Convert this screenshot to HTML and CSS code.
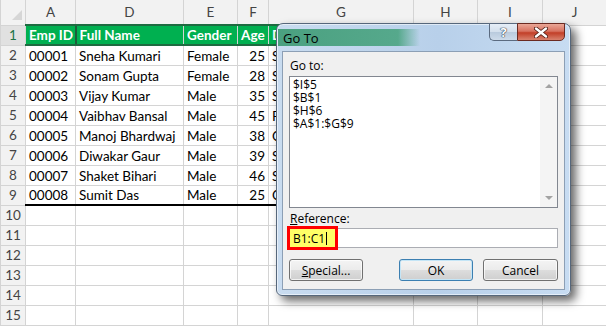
FILE: index.html
```html
<!DOCTYPE html>
<html lang="en">
<head>
    <meta charset="UTF-8">
    <meta name="viewport" content="width=device-width, initial-scale=1.0">
    <title>Go To</title>
    <link rel="stylesheet" href="styles.css">
</head>
<body>
    <div class="sheet">
        <table class="grid">
            <colgroup>
                <col class="c-rh"><col class="c-a"><col class="c-d"><col class="c-e"><col class="c-f">
                <col class="c-g"><col class="c-h"><col class="c-i"><col class="c-j">
            </colgroup>
            <thead>
                <tr>
                    <th class="corner"><span class="select-all"></span></th>
                    <th>A</th><th>D</th><th>E</th><th>F</th><th>G</th><th>H</th><th>I</th><th>J</th>
                </tr>
            </thead>
            <tbody>
                <tr class="title-row">
                    <th class="picked">1</th>
                    <td>Emp ID</td><td class="after-hidden">Full Name</td><td>Gender</td><td>Age</td><td><span class="peek">Department</span></td>
                    <td></td><td></td><td></td>
                </tr>
                <tr><th>2</th><td>00001</td><td>Sneha Kumari</td><td>Female</td><td class="num">25</td><td><span class="peek">Sales</span></td><td></td><td></td><td></td></tr>
                <tr><th>3</th><td>00002</td><td>Sonam Gupta</td><td>Female</td><td class="num">28</td><td><span class="peek">Sales</span></td><td></td><td></td><td></td></tr>
                <tr><th>4</th><td>00003</td><td>Vijay Kumar</td><td>Male</td><td class="num">35</td><td><span class="peek">Sales</span></td><td></td><td></td><td></td></tr>
                <tr><th>5</th><td>00004</td><td>Vaibhav Bansal</td><td>Male</td><td class="num">45</td><td><span class="peek">Production</span></td><td></td><td></td><td></td></tr>
                <tr><th>6</th><td>00005</td><td>Manoj Bhardwaj</td><td>Male</td><td class="num">38</td><td><span class="peek">Customer Care</span></td><td></td><td></td><td></td></tr>
                <tr><th>7</th><td>00006</td><td>Diwakar Gaur</td><td>Male</td><td class="num">39</td><td><span class="peek">Sales</span></td><td></td><td></td><td></td></tr>
                <tr><th>8</th><td>00007</td><td>Shaket Bihari</td><td>Male</td><td class="num">46</td><td><span class="peek">Sales</span></td><td></td><td></td><td></td></tr>
                <tr class="last-row"><th>9</th><td>00008</td><td>Sumit Das</td><td>Male</td><td class="num">25</td><td><span class="peek">Customer Care</span></td><td></td><td></td><td></td></tr>
                <tr><th>10</th><td></td><td></td><td></td><td></td><td></td><td></td><td></td><td></td></tr>
                <tr><th>11</th><td></td><td></td><td></td><td></td><td></td><td></td><td></td><td></td></tr>
                <tr><th>12</th><td></td><td></td><td></td><td></td><td></td><td></td><td></td><td></td></tr>
                <tr><th>13</th><td></td><td></td><td></td><td></td><td></td><td></td><td></td><td></td></tr>
                <tr><th>14</th><td></td><td></td><td></td><td></td><td></td><td></td><td></td><td></td></tr>
                <tr><th>15</th><td></td><td></td><td></td><td></td><td></td><td></td><td></td><td></td></tr>
            </tbody>
        </table>

        <div class="dialog">
            <div class="titlebar"><span class="title">Go To</span></div>
            <div class="caption">
                <div class="cap-btn help">?</div>
                <div class="cap-btn close">
                    <svg width="14" height="11" viewBox="0 0 14 11">
                        <path d="M2 1.5 L12 9.5 M12 1.5 L2 9.5" stroke="#4a1a12" stroke-width="4" stroke-linecap="round"/>
                        <path d="M2 1.5 L12 9.5 M12 1.5 L2 9.5" stroke="#fff" stroke-width="2.4" stroke-linecap="round"/>
                    </svg>
                </div>
            </div>

            <div class="client">
                <div class="label">Go to:</div>
                <div class="listbox">
                    <div class="items">
                        <div>$I$5</div>
                        <div>$B$1</div>
                        <div>$H$6</div>
                        <div>$A$1:$G$9</div>
                    </div>
                    <div class="scroll">
                        <span class="arrow up"></span>
                        <span class="arrow down"></span>
                    </div>
                </div>

                <div class="label ref-label"><u>R</u>eference:</div>
                <div class="ref-field">
                    <div class="ref-input"></div>
                    <div class="ref-highlight">B1:C1<span class="caret"></span></div>
                </div>

                <div class="buttons">
                    <div class="btn special"><u>S</u>pecial...</div>
                    <div class="btn default">OK</div>
                    <div class="btn">Cancel</div>
                </div>
            </div>
        </div>
    </div>
</body>
</html>
```

FILE: styles.css
```css
body {
    margin: 0;
    background: #fff;
    overflow: hidden;
}
.sheet {
    position: relative;
    width: 606px;
    height: 326px;
    overflow: hidden;
}

/* spreadsheet grid */
.grid {
    border-collapse: collapse;
    table-layout: fixed;
    width: 606px;
    font-family: Lato, "Liberation Sans", sans-serif;
    font-size: 13.5px;
    color: #000;
}
.c-rh { width: 25px; }
.c-a { width: 50px; }
.c-d { width: 108px; }
.c-e { width: 54px; }
.c-f { width: 31px; }
.c-g { width: 145px; }
.c-h { width: 64px; }
.c-i { width: 65px; }
.c-j { width: 64px; }

.grid th,
.grid td {
    border: 1px solid #d4d4d4;
    padding: 0 3px;
    white-space: nowrap;
    overflow: hidden;
}
.grid thead tr { height: 25px; }
.grid tbody tr { height: 20px; }
.grid th {
    background: #f2f2f2;
    color: #444;
    font-weight: normal;
    text-align: center;
    padding: 0;
}
.grid thead th { border-top: none; }
.grid td {
    vertical-align: bottom;
    line-height: 18px;
}
.grid td.num { text-align: right; }

/* column G sits under the dialog, only its first letters show */
.peek {
    display: inline-block;
    width: 6px;
    overflow: hidden;
    vertical-align: bottom;
}

.corner { position: relative; }
.select-all {
    position: absolute;
    right: 3px;
    bottom: 5px;
    width: 0;
    height: 0;
    border-left: 10px solid transparent;
    border-bottom: 10px solid #d6d6d6;
}

.grid th.picked {
    background: #e1e1e1;
    color: #217346;
}
.title-row td:nth-child(-n+6) {
    background: #00b050;
    color: #fff;
    font-weight: bold;
    border-top: 2px solid #1e6b41;
    border-bottom: 2px solid #1e6b41;
}
.title-row td.after-hidden { border-left: 2px solid #1e5c3a; }
.last-row td:nth-child(-n+6) { border-bottom: 2px solid #000; }

/* Go To dialog */
.dialog {
    position: absolute;
    left: 276px;
    top: 23px;
    width: 295px;
    height: 273px;
    box-sizing: border-box;
    padding: 0 5px 5px;
    border: 1px solid #56677b;
    border-radius: 7px 7px 6px 6px;
    background: linear-gradient(90deg, #c9dcf0 0, #b8d0ea 55%, #c7dcf2 100%);
    box-shadow: inset 0 0 0 1px rgba(255, 255, 255, 0.55), 5px 5px 10px rgba(0, 0, 0, 0.6);
    font-family: "Open Sans", "Noto Sans", sans-serif;
    font-size: 12px;
    color: #000;
}
.titlebar {
    position: relative;
    height: 27px;
    display: flex;
    align-items: center;
    padding-left: 1px;
    background: linear-gradient(90deg, rgba(52, 150, 108, 0.85) 0, rgba(60, 158, 116, 0.8) 120px, rgba(60, 158, 116, 0) 142px);
    background-size: 100% 17px;
    background-position: 0 5px;
    background-repeat: no-repeat;
    margin-left: -4px;
    padding-left: 5px;
}
.title {
    position: relative;
    font-size: 13px;
}

.caption {
    position: absolute;
    top: -1px;
    right: 5px;
    display: flex;
}
.cap-btn {
    height: 18px;
    box-sizing: border-box;
    display: flex;
    align-items: center;
    justify-content: center;
}
.help {
    width: 28px;
    border: 1px solid #5b6b80;
    border-right: none;
    border-radius: 0 0 0 5px;
    background: linear-gradient(#e6eef7 0, #d3dfec 50%, #b9cadd 51%, #cddbea 100%);
    color: #fff;
    font-weight: bold;
    font-size: 13px;
    text-shadow: 0 0 1px #2c3a4a, 0 0 1px #2c3a4a, 0 0 1px #2c3a4a;
}
.close {
    width: 48px;
    border: 1px solid #6b2a21;
    border-radius: 0 0 5px 0;
    background: linear-gradient(#eaa797 0, #d77260 45%, #c23f28 55%, #d8826e 100%);
}

.client {
    height: 239px;
    box-sizing: border-box;
    padding: 6px 6px 0;
    background: #f0f0f0;
    border: 1px solid #8c9fb5;
}
.label { line-height: 16px; padding-left: 1px; }
.listbox {
    margin-top: 2px;
    height: 132px;
    box-sizing: border-box;
    display: flex;
    border: 1px solid #828790;
    background: #fff;
}
.items {
    flex: 1;
    padding: 1px 3px;
    line-height: 13px;
}
.scroll {
    width: 17px;
    display: flex;
    flex-direction: column;
    justify-content: space-between;
    align-items: center;
    padding: 7px 0;
    background: #f4f4f4;
}
.arrow {
    width: 0;
    height: 0;
    border-left: 4px solid transparent;
    border-right: 4px solid transparent;
}
.arrow.up { border-bottom: 4px solid #a3a3a3; }
.arrow.down { border-top: 4px solid #a3a3a3; }

.ref-label { margin-top: 3px; }
.ref-field {
    position: relative;
    margin-top: 1px;
}
.ref-input {
    height: 20px;
    box-sizing: border-box;
    border: 1px solid #abadb3;
    background: #fff;
}
.ref-highlight {
    position: absolute;
    left: -2px;
    top: -2px;
    width: 51px;
    height: 24px;
    box-sizing: border-box;
    border: 3px solid #ff0000;
    background: #ffff66;
    padding-left: 3px;
    display: flex;
    align-items: center;
}
.caret {
    display: inline-block;
    width: 1px;
    height: 13px;
    margin-left: 1px;
    background: #000;
}

.buttons {
    margin-top: 11px;
    display: flex;
    gap: 10px;
}
.btn {
    width: 74px;
    height: 22px;
    box-sizing: border-box;
    display: flex;
    align-items: center;
    justify-content: center;
    border: 1px solid #707070;
    border-radius: 3px;
    background: linear-gradient(#f4f4f4 0, #ebebeb 50%, #dddddd 51%, #cfcfcf 100%);
    box-shadow: inset 0 0 0 1px rgba(255, 255, 255, 0.7);
}
.btn.special { margin-right: auto; }
.btn.default {
    border-color: #3c7fb1;
    box-shadow: inset 0 0 0 1px #c4e5f6;
}
.btn:last-child { width: 75px; }
```
